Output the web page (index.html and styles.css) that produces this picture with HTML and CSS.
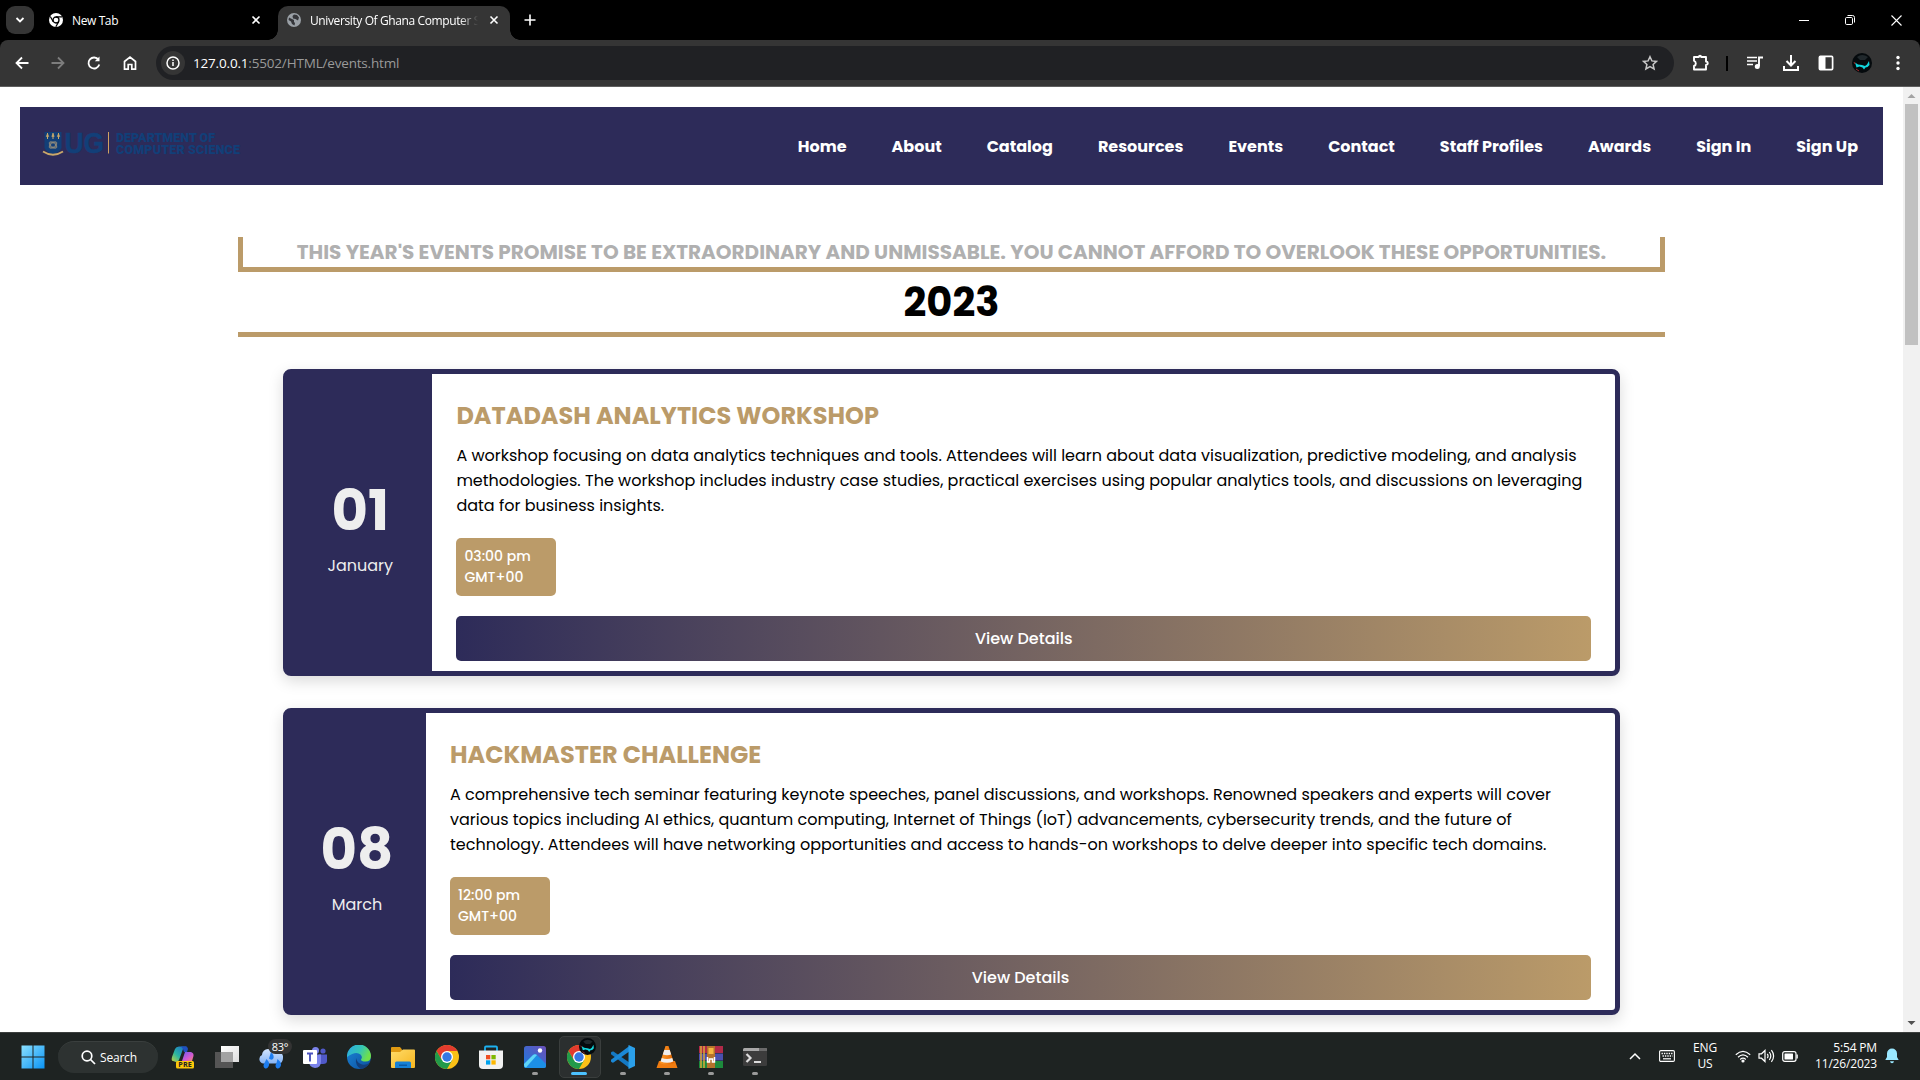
FILE: index.html
```html
<!DOCTYPE html>
<html lang="en">
<head>
<meta charset="utf-8">
<title>University Of Ghana Computer Science</title>
<link rel="stylesheet" href="styles.css">
</head>
<body>
<svg class="defs" width="0" height="0">
  <defs>
    <linearGradient id="gWin" x1="0" y1="0" x2="1" y2="1"><stop offset="0" stop-color="#8ae0ff"/><stop offset="1" stop-color="#0a93f5"/></linearGradient>
    <linearGradient id="gCopA" x1="0" y1="1" x2="1" y2="0"><stop offset="0" stop-color="#c8d63a"/><stop offset=".4" stop-color="#2bb5a0"/><stop offset="1" stop-color="#1a63d8"/></linearGradient>
    <linearGradient id="gCopB" x1="0" y1="0" x2="1" y2="1"><stop offset="0" stop-color="#6a5cf0"/><stop offset=".6" stop-color="#d45ad0"/><stop offset="1" stop-color="#f58a6a"/></linearGradient>
    <linearGradient id="gCloud" x1="0" y1="0" x2="0" y2="1"><stop offset="0" stop-color="#d3e5ff"/><stop offset="1" stop-color="#86b4f5"/></linearGradient>
    <linearGradient id="gEdge" x1="0" y1="0" x2="1" y2=".4"><stop offset="0" stop-color="#2aa8e8"/><stop offset=".6" stop-color="#35c6b4"/><stop offset="1" stop-color="#6fe04a"/></linearGradient>
    <linearGradient id="gEdgeB" x1="0" y1="0" x2="1" y2="1"><stop offset="0" stop-color="#1b86d8"/><stop offset="1" stop-color="#0c4f9e"/></linearGradient>
    <linearGradient id="gFold" x1="0" y1="0" x2="1" y2="1"><stop offset="0" stop-color="#ffdc6a"/><stop offset="1" stop-color="#f6b51e"/></linearGradient>
    <linearGradient id="gPhoto" x1="0" y1="1" x2="1" y2="0"><stop offset="0" stop-color="#1a7be0"/><stop offset="1" stop-color="#6b4fb8"/></linearGradient>
    <linearGradient id="gCone" x1="0" y1="0" x2="1" y2="0"><stop offset="0" stop-color="#ff9a2a"/><stop offset="1" stop-color="#e06400"/></linearGradient>
    <linearGradient id="gSq" x1="0" y1="0" x2="1" y2="1"><stop offset="0" stop-color="#fff"/><stop offset="1" stop-color="#ddd"/></linearGradient>
    <symbol id="chrome" viewBox="0 0 24 24">
      <circle cx="12" cy="12" r="12" fill="#fbc116"/>
      <path d="M12 6H22.4A12 12 0 0 0 1.6 6L6.8 15Z" fill="#e33b2e"/>
      <path d="M1.6 6A12 12 0 0 0 12 24L17.2 15 12 12 6.8 15Z" fill="#229a4a"/>
      <circle cx="12" cy="12" r="6" fill="#fff"/><circle cx="12" cy="12" r="4.7" fill="#3578e5"/>
    </symbol>
    <symbol id="x" viewBox="0 0 10 10"><path d="M1.5 1.5l7 7M8.500 1.500l-7 7" stroke="currentColor" stroke-width="1.6"/></symbol>
    <symbol id="avatar" viewBox="0 0 20 20"><circle cx="10" cy="10" r="10" fill="#050a0d"/><path d="M5 4Q10 0 16 4L13 7 8 7Z" fill="#20282c"/><path d="M3 9.500l3 2 4 .5 3 1 2-1.500 2-3.500.5 4-2 2-2 .5-1.500 2-1.500-2-3-1-3 1Z" fill="#12d5dd"/><path d="M2 9l1 2M4 16l3 2" stroke="#a02a2a"/></symbol>
  </defs>
</svg>

<div class="screen">
  <header class="tabstrip">
    <button class="tabsearch"><svg width="10" height="8" viewBox="0 0 10 8"><path d="M1.500 2l3.500 3.500L8.500 2" fill="none" stroke="#fff" stroke-width="1.800"/></svg></button>
    <div class="tab">
      <svg width="14" height="14" viewBox="0 0 14 14"><circle cx="7" cy="7" r="7" fill="#fff"/><circle cx="7" cy="7" r="3" fill="#fff" stroke="#000" stroke-width="1.300"/><path d="M7 3.800h6M4.200 8.600L1.300 3.500M9.700 8.700L6.800 13.800" stroke="#000" stroke-width="1.200"/></svg>
      <span class="tab-title">New Tab</span>
      <svg class="tab-x" width="10" height="10"><use href="#x"/></svg>
    </div>
    <div class="tab active">
      <svg width="14" height="14" viewBox="0 0 14 14"><circle cx="7" cy="7" r="7" fill="#9aa0a6"/><path d="M2 4.500L5 6l2 1v2l1 1-.5 2.500L5 11 4 8.500 1.500 7ZM7 1.500l3 .5 2 2.500-1 3-2.500-1.500L6 5.500 5.500 3Z" fill="#35363a"/></svg>
      <span class="tab-title">University Of Ghana Computer Science</span>
      <svg class="tab-x" width="10" height="10"><use href="#x"/></svg>
    </div>
    <svg class="newtab" width="12" height="12" viewBox="0 0 12 12"><path d="M6 .5v11M.5 6h11" stroke="#fff" stroke-width="1.600"/></svg>
    <div class="winbtns">
      <svg width="10" height="12" viewBox="0 0 10 12"><path d="M0 6.500h10" stroke="#fff"/></svg>
      <svg width="10" height="10" viewBox="0 0 10 10" fill="none" stroke="#fff"><rect x=".5" y="2.500" width="7" height="7" rx="1.200"/><path d="M2.500 .5h5a2 2 0 0 1 2 2v5"/></svg>
      <svg width="11" height="11" viewBox="0 0 11 11"><path d="M.5 .5l10 10M10.500 .5l-10 10" stroke="#fff" stroke-width="1.100"/></svg>
    </div>
  </header>

  <div class="toolbar">
    <div class="navicons">
      <svg width="16" height="16" viewBox="0 0 16 16" fill="none" stroke="#fff" stroke-width="1.800"><path d="M14.500 8H3M8 2.500L2.500 8 8 13.500"/></svg>
      <svg width="16" height="16" viewBox="0 0 16 16" fill="none" stroke="#7d7d7d" stroke-width="1.800"><path d="M1.500 8H13M8 2.500L13.500 8 8 13.500"/></svg>
      <svg width="16" height="16" viewBox="0 0 16 16" fill="none" stroke="#fff" stroke-width="1.800"><path d="M13.300 9.500A5.500 5.500 0 1 1 12.500 4.800"/><path d="M13.500 1.500v4.800H8.800Z" fill="#fff" stroke="none"/></svg>
      <svg width="16" height="16" viewBox="0 0 16 16" fill="none" stroke="#fff" stroke-width="1.700"><path d="M2.500 6.500L8 2l5.500 4.500V14.200H9.800V9.500H6.200v4.700H2.500Z"/></svg>
    </div>
    <div class="omnibox">
      <span class="info"><svg width="14" height="14" viewBox="0 0 14 14" fill="none" stroke="#fff" stroke-width="1.500"><circle cx="7" cy="7" r="6"/><path d="M7 6v4M7 3.500v1.400"/></svg></span>
      <span class="url"><b>127.0.0.1</b>:5502/HTML/events.html</span>
      <svg class="star" width="16" height="16" viewBox="0 0 16 16"><path d="M8 1.700l1.900 4.200 4.600.5-3.400 3.100 1 4.500L8 11.700 3.900 14l1-4.500L1.500 6.400l4.600-.5Z" fill="none" stroke="#c7c7c7" stroke-width="1.500"/></svg>
    </div>
    <div class="actions">
      <svg width="18" height="18" viewBox="0 0 18 18"><path d="M2 3h4.800q.2-1.300 1.200-1.300T9.200 3H14V7.500q1.800.2 1.800 1.700T14 11V15.500H2V12q1.800-.5 1.800-2.600T2 6.800Z" fill="none" stroke="#fff" stroke-width="1.900" stroke-linejoin="round"/></svg>
      <i class="sep"></i>
      <svg width="18" height="16" viewBox="0 0 18 16"><path d="M1 2.500h10M1 6h10M1 9.500h6" stroke="#fff" stroke-width="1.700"/><path d="M13 11V2.500h4" fill="none" stroke="#fff" stroke-width="1.900"/><circle cx="11.300" cy="11.500" r="2.500" fill="#fff"/></svg>
      <svg width="18" height="18" viewBox="0 0 18 18" fill="none" stroke="#fff" stroke-width="2"><path d="M9 1v10M4.500 7L9 11.500 13.500 7M2 12v4h14v-4"/></svg>
      <svg width="16" height="16" viewBox="0 0 16 16"><rect x="1.400" y="1.400" width="13.200" height="13.200" rx="1" fill="none" stroke="#fff" stroke-width="1.700"/><path d="M1 1h6.500v14H1Z" fill="#fff"/></svg>
      <svg width="20" height="20"><use href="#avatar"/></svg>
      <svg width="4" height="16" viewBox="0 0 4 16" fill="#fff"><circle cx="2" cy="2.500" r="1.700"/><circle cx="2" cy="8" r="1.700"/><circle cx="2" cy="13.500" r="1.700"/></svg>
    </div>
  </div>

  <div class="viewport">
    <main class="page">
      <nav class="nav">
        <svg class="logo" width="204" height="34" viewBox="0 -2 204 34">
          <path d="M4.500 2H21.500V18Q19 23 13 24 7 23 4.500 18Z" fill="#123f78"/>
          <path d="M7.500 3v6M13 3v6M18.500 3v6" stroke="#c9a86a"/><path d="M6.300 6.500l1.200-3 1.200 3ZM11.800 6.500l1.200-3 1.200 3ZM17.300 6.500l1.200-3 1.200 3Z" fill="#c9a86a" stroke="#c9a86a" stroke-width=".6"/>
          <g fill="none" stroke="#a8997c" stroke-width=".7"><ellipse cx="13" cy="15" rx="4.500" ry="2" transform="rotate(35 13 15)"/><ellipse cx="13" cy="15" rx="4.500" ry="2" transform="rotate(-35 13 15)"/><circle cx="13" cy="15" r="3.200"/></g>
          <path d="M3 21.500Q13 28 23 21.500" fill="none" stroke="#c9a86a" stroke-width="1.800"/>
          <text class="logo-ug" x="24.500" y="23.200" textLength="39.500" lengthAdjust="spacingAndGlyphs">UG</text>
          <rect x="68" y="2" width="1" height="21.500" fill="#d0a262"/>
          <text class="logo-txt" x="76" y="12" textLength="99" lengthAdjust="spacing">DEPARTMENT OF</text>
          <text class="logo-txt" x="76" y="23.500" textLength="124" lengthAdjust="spacing">COMPUTER SCIENCE</text>
        </svg>
        <ul class="links">
          <li>Home</li><li>About</li><li>Catalog</li><li>Resources</li><li>Events</li><li>Contact</li><li>Staff Profiles</li><li>Awards</li><li>Sign In</li><li>Sign Up</li>
        </ul>
      </nav>

      <section class="events">
        <h2 class="tagline">THIS YEAR'S EVENTS PROMISE TO BE EXTRAORDINARY AND UNMISSABLE. YOU CANNOT AFFORD TO OVERLOOK THESE OPPORTUNITIES.</h2>
        <h1 class="year">2023</h1>

        <article class="card january">
          <div class="date"><span class="day">01</span><span class="month">January</span></div>
          <div class="body">
            <h3>DATADASH ANALYTICS WORKSHOP</h3>
            <p>A workshop focusing on data analytics techniques and tools. Attendees will learn about data visualization, predictive modeling, and analysis methodologies. The workshop includes industry case studies, practical exercises using popular analytics tools, and discussions on leveraging data for business insights.</p>
            <div class="time"><span>03:00 pm</span><span>GMT+00</span></div>
            <a class="details">View Details</a>
          </div>
        </article>

        <article class="card march">
          <div class="date"><span class="day">08</span><span class="month">March</span></div>
          <div class="body">
            <h3>HACKMASTER CHALLENGE</h3>
            <p>A comprehensive tech seminar featuring keynote speeches, panel discussions, and workshops. Renowned speakers and experts will cover various topics including AI ethics, quantum computing, Internet of Things (IoT) advancements, cybersecurity trends, and the future of technology. Attendees will have networking opportunities and access to hands-on workshops to delve deeper into specific tech domains.</p>
            <div class="time"><span>12:00 pm</span><span>GMT+00</span></div>
            <a class="details">View Details</a>
          </div>
        </article>
      </section>
    </main>
    <div class="scrollbar">
      <svg width="17" height="17" viewBox="0 0 17 17"><path d="M4.500 11L8.500 7l4 4Z" fill="#a3a3a3"/></svg>
      <i class="thumb"></i>
      <svg class="down" width="17" height="17" viewBox="0 0 17 17"><path d="M4.500 6L8.500 10l4-4Z" fill="#505050"/></svg>
    </div>
  </div>

  <footer class="taskbar">
    <svg class="start" width="24" height="24" viewBox="0 0 24 24"><path d="M.5 .5h11v11H.5ZM12.500 .5h11v11h-11ZM.5 12.500h11v11H.5ZM12.500 12.500h11v11h-11Z" fill="url(#gWin)"/></svg>
    <div class="search"><svg width="15" height="15" viewBox="0 0 15 15" fill="none" stroke="#fff" stroke-width="1.700"><circle cx="6" cy="6" r="4.800"/><path d="M9.500 9.500L14 14"/></svg>Search</div>
    <div class="apps">
      <span class="app"><svg width="24" height="24" viewBox="0 0 24 24"><path d="M2 16Q0 16 1 12L4 4Q5 1.500 8 1.500H16L12 4 8 15Q7 17 5 17Z" fill="url(#gCopA)"/><path d="M10 1.500h5Q17 2 17 4l-1 3H13L12 4Z" fill="#1f4fc0"/><path d="M14 7H20Q23 8 22.500 11L21 16H11Z" fill="url(#gCopB)"/><rect x="5" y="16" width="18" height="7.500" rx="1.500" fill="#fcc80a"/><text class="pre" x="7.300" y="22.300" textLength="13.500">PRE</text></svg></span>
      <span class="app"><svg width="24" height="24" viewBox="0 0 24 24"><rect x="6" y="1" width="18" height="16" fill="url(#gSq)"/><rect x="0" y="7" width="18" height="16" fill="#555"/><rect x="6" y="7" width="12" height="10" fill="#a2a2a2"/></svg></span>
      <span class="app"><svg width="24" height="24" viewBox="0 0 24 24"><path d="M4 18.500a4.500 4.500 0 0 1-1-8.500 6 6 0 0 1 6-6 6 6 0 0 1 6 3 6 6 0 0 1 9 6q0 5.500-5 5.500Z" fill="url(#gCloud)"/><path d="M7.500 14q4 4 2 7.500-1.500 3-4 1.500-2-2 0-5ZM18.500 14q5 4 3 7.500-1.500 3-4 1.500-2-2 0-5ZM12 7q4 4 2 7-2 1.500-4-.5Z" fill="#1d7df0"/></svg><b class="temp">83°</b></span>
      <span class="app"><svg width="24" height="24" viewBox="0 0 24 24"><circle cx="12.500" cy="5.500" r="3.500" fill="#7b83eb"/><circle cx="20" cy="6" r="2.600" fill="#5059c9"/><path d="M16 9.500h8V16q0 3-4 3h-4Z" fill="#5059c9"/><path d="M6 9.500h12v7q0 6-6 6.500-6-1-6-6.500Z" fill="#7b83eb"/><rect x="0" y="5" width="14" height="14" rx="1" fill="#fff"/><path d="M4 8.500h6M7 8.500v8" stroke="#4a52bd" stroke-width="1.900"/></svg></span>
      <span class="app"><svg width="24" height="24" viewBox="0 0 24 24"><circle cx="12" cy="12" r="12" fill="url(#gEdgeB)"/><path d="M0 12A12 12 0 0 1 24 11Q24 16.500 18.500 16.500 14 16.500 14 14.500 16 12 13.500 9.500 9 5.500 0 12Z" fill="url(#gEdge)"/><path d="M9 13q1 5 6 6.500 4 1 7.500-1.500Q20 23 14 24 8 21 9 13Z" fill="#123f7c"/></svg></span>
      <span class="app"><svg width="24" height="24" viewBox="0 0 24 24"><path d="M0 3q0-1 1-1h8l2 2.500V7H0Z" fill="#e09a12"/><path d="M0 7h9l3-2.500h11q1 0 1 1V22q0 1-1 1H1q-1 0-1-1Z" fill="url(#gFold)"/><path d="M4 23v-5q0-1.500 1.500-1.500h13Q20 16.500 20 18v5Z" fill="#1681d6"/><rect x="8" y="19.500" width="8" height="1.500" fill="#0b5aa5"/></svg></span>
      <span class="app"><svg width="24" height="24"><use href="#chrome"/></svg></span>
      <span class="app"><svg width="24" height="24" viewBox="0 0 24 24"><path d="M6 6V2.500q0-1 1-1h10q1 0 1 1V6" fill="none" stroke="#1cb1f0" stroke-width="1.800"/><path d="M0 5.500h24V20q0 4-4 4H4q-4 0-4-4Z" fill="#f2f2f2"/><path d="M7 10h4.300v4.300H7Z" fill="#f04f22"/><path d="M12.400 10h4.300v4.300h-4.300Z" fill="#7eb801"/><path d="M7 15.300h4.300v4.300H7Z" fill="#00a3ee"/><path d="M12.400 15.300h4.300v4.300h-4.300Z" fill="#fdb802"/></svg></span>
      <span class="app running"><svg width="24" height="24" viewBox="0 0 24 24"><rect x="1" y="1" width="22" height="22" rx="2.500" fill="url(#gPhoto)"/><path d="M1 19L10 10q2-1.500 4 0l9 9v2q0 2-2 2H3q-2 0-2-2Z" fill="#1c8fe6"/><path d="M1 19L10 10q2-1.500 4 0L3 22.500Q1 22 1 20Z" fill="#5fd4f7"/><circle cx="17" cy="5.500" r="2.200" fill="#fff"/></svg></span>
      <span class="app current"><svg width="24" height="24"><use href="#chrome"/></svg><svg class="badge" width="17" height="17"><use href="#avatar"/></svg></span>
      <span class="app running"><svg width="24" height="24" viewBox="0 0 24 24"><path d="M0 7.500Q1 6 2.500 6.500L19 18v5.500L0 9.300Z" fill="#1479c4"/><path d="M0 16.500Q1 18 2.500 17.500L19 6V.5L0 14.700Z" fill="#1b88d6"/><path d="M17.500 0L24 3v18l-6.500 3Z" fill="#2ba0ea"/></svg></span>
      <span class="app running"><svg width="24" height="24" viewBox="0 0 24 24"><path d="M4 16h16l2.500 7h-21Z" fill="#f07c10"/><path d="M10.500 1h3L19 18q-7 3.500-14 0Z" fill="url(#gCone)"/><path d="M9.300 5h5.400l1.500 4.500q-4 1.500-8.400 0ZM6.800 13q5 2 10.400 0l1.200 3.500q-6 2.500-12.800 0Z" fill="#eee"/></svg></span>
      <span class="app running"><svg width="24" height="24" viewBox="0 0 24 24"><rect y="1" width="24" height="7" fill="#b12a48"/><rect y="8.500" width="24" height="7" fill="#4a4fae"/><rect y="16" width="24" height="7" fill="#1d8a3c"/><path d="M2 1v22M5 1v22" stroke="#d9a93a" stroke-width="1.500"/><rect x="8" y="1" width="8" height="22" fill="#b4722c"/><path d="M9.500 3h5v6h-5Z" fill="#f5b640"/><path d="M8.500 12v5h2v-3h3v3h2v-5" fill="none" stroke="#fff" stroke-width="1.500"/></svg></span>
      <span class="app running"><svg width="24" height="24" viewBox="0 0 24 24"><rect y="3" width="24" height="18" rx="1.500" fill="#3c3c3c"/><path d="M0 6V4.500Q0 3 1.500 3h21Q24 3 24 4.500V6Z" fill="#a8a8a8"/><path d="M16 3h6.500Q24 3 24 4.500V6h-8Z" fill="#6a6a6a"/><path d="M3.500 9l4 4-4 4" fill="none" stroke="#ddd" stroke-width="2.200"/><path d="M11 17h7" stroke="#eee" stroke-width="1.800"/></svg></span>
    </div>
    <div class="tray">
      <svg class="chev" width="12" height="8" viewBox="0 0 12 8"><path d="M1 7l5-5 5 5" fill="none" stroke="#fff" stroke-width="1.500"/></svg>
      <svg class="kbd" width="16" height="12" viewBox="0 0 16 12"><rect x=".6" y=".6" width="14.800" height="10.800" rx="1.200" fill="none" stroke="#fff" stroke-width="1.100"/><path d="M2.500 3.500h11M3.500 6h10" stroke="#fff" stroke-width="1.300" stroke-dasharray="1.400 1"/><path d="M4 8.800h8" stroke="#fff" stroke-width="1.200"/></svg>
      <div class="lang">ENG<br>US</div>
      <div class="status">
        <svg width="16" height="13" viewBox="0 0 16 13" fill="none" stroke="#fff" stroke-width="1.200"><path d="M.8 4.800q7.200-7 14.400 0M3 7.200q5-4.800 10 0M5.200 9.500q2.800-2.600 5.600 0"/><circle cx="8" cy="11" r="1" fill="#fff"/></svg>
        <svg width="17" height="14" viewBox="0 0 17 14" fill="none" stroke="#fff" stroke-width="1.200"><path d="M1 4.800h2.500L7 1.500v11L3.500 9.200H1ZM9.300 4.800q1.500 2.200 0 4.400M11.300 3q3 4 0 8M13.400 1.200q4.400 5.800 0 11.600"/></svg>
        <svg width="17" height="11" viewBox="0 0 17 11"><rect x=".7" y=".7" width="13.300" height="9.600" rx="2" fill="none" stroke="#fff" stroke-width="1.200"/><rect x="2.500" y="2.500" width="8.500" height="6" rx=".6" fill="#fff"/><path d="M14.500 3.500h1.300v4h-1.300Z" fill="#fff"/></svg>
      </div>
      <div class="clock">5:54 PM<br>11/26/2023</div>
      <svg class="bell" width="14" height="16" viewBox="0 0 14 16" fill="#9be8ff"><path d="M7 .5a5 5 0 0 1 5 5V9l1.700 3H.3L2 9V5.500a5 5 0 0 1 5-5ZM5 13.200h4q-.4 2-2 2t-2-2Z"/></svg>
    </div>
  </footer>
</div>
</body>
</html>
```
FILE: styles.css
```css
* { box-sizing: border-box; }
body { margin: 0; background: #fff; font-family: Poppins, Inter, sans-serif; overflow: hidden; }
.defs { position: absolute; }
svg { display: block; flex: none; }
.screen { width: 1920px; height: 1080px; display: flex; flex-direction: column; background: #000; }

/* browser chrome */
.tabstrip, .toolbar, .taskbar { font-family: "Segoe UI", "Open Sans", sans-serif; color: #fff; }
.tabstrip { height: 40px; background: #000; display: flex; align-items: center; padding-left: 6px; font-size: 12px; letter-spacing: -.39px; }
.tabsearch { width: 28px; height: 28px; padding: 0; border: 0; border-radius: 9px; background: #353535; display: flex; align-items: center; justify-content: center; }
.tab { height: 34px; align-self: flex-end; display: flex; align-items: center; padding: 0 11px 6px 15px; width: 238px; }
.tab:not(.active) { width: 244px; padding-right: 17px; }
.tab-title { flex: 1; margin-left: 9px; white-space: nowrap; overflow: hidden; }
.tab.active { position: relative; width: 232px; background: #353535; border-radius: 10px 10px 0 0; padding: 0 11px 6px 9px; }
.tab.active::before, .tab.active::after { content: ""; position: absolute; bottom: 0; width: 10px; height: 10px; }
.tab.active::before { left: -10px; background: radial-gradient(circle at 0 0, transparent 9.500px, #353535 10px); }
.tab.active::after { right: -10px; background: radial-gradient(circle at 100% 0, transparent 9.500px, #353535 10px); }
.tab.active .tab-title { margin-right: 9px; -webkit-mask-image: linear-gradient(90deg, #000 150px, transparent 168px); mask-image: linear-gradient(90deg, #000 150px, transparent 168px); }
.newtab { margin-left: 14px; }
.winbtns { margin-left: auto; display: flex; align-items: center; gap: 36px; padding-right: 18px; }
.toolbar { height: 47px; background: #353535; border-bottom: 1px solid #5e5e5e; border-radius: 8px 8px 0 0; display: flex; align-items: center; }
.navicons { display: flex; gap: 20px; padding-left: 14px; width: 156px; }
.omnibox { width: 1518px; height: 34px; border-radius: 17px; background: #202124; display: flex; align-items: center; padding: 0 16px 0 5px; }
.info { width: 24px; height: 24px; border-radius: 50%; background: #353535; display: flex; align-items: center; justify-content: center; }
.url { margin-left: 8px; font-size: 13.500px; letter-spacing: -.18px; color: #9a9a9a; }
.url b { font-weight: 400; color: #fff; }
.star { margin-left: auto; }
.actions { display: flex; align-items: center; padding-left: 18px; }
.actions .sep { width: 2px; height: 15px; background: #000; margin: 0 18px 0 16px; }
.actions svg + svg { margin-left: 18px; }
.actions svg:last-child { margin-left: 24px; }

/* page viewport */
.viewport { height: 945px; background: #fff; display: flex; }
.page { width: 1903px; padding: 20px; overflow: hidden; }
.nav { height: 78px; background: #2d2b59; display: flex; align-items: center; padding: 0 25px 0 20px; }
.logo { margin-top: -3px; }
.logo-ug { font: 700 29px "Liberation Sans", sans-serif; fill: #123f78; stroke: #123f78; stroke-width: .5px; }
.logo-txt { font: 900 12.500px Roboto, sans-serif; fill: #123f78; }
.links { list-style: none; margin: 0 0 0 auto; padding: 0; display: flex; gap: 45px; color: #fff; font-size: 16px; font-weight: 700; white-space: nowrap; }

.events { width: 1427px; margin: 52px auto 0 218px; }
.tagline { margin: 0; height: 35px; line-height: 30px; border: 5px solid #bb9b69; border-top: 0; text-align: center; font-size: 20px; font-weight: 700; color: #b0b0b0; white-space: nowrap; }
.year { margin: 0; height: 65px; line-height: 60px; border-bottom: 5px solid #bb9b69; text-align: center; font-size: 40px; font-weight: 700; color: #000; }
.card { margin: 32px 45px 0; width: 1337px; height: 307px; border: 5px solid #2d2b59; border-radius: 8px; background: #fff; box-shadow: 0 5px 15px rgba(0, 0, 0, .15); display: flex; }
.date { flex: none; width: 144.400px; background: #2d2b59; color: #eee; display: flex; flex-direction: column; align-items: center; padding-top: 95px; }
.march .date { width: 138px; }
.day { font-size: 56px; font-weight: 700; line-height: 84px; }
.month { font-size: 16px; line-height: 24px; margin-top: 1px; }
.body { flex: 1; padding: 24px 24px 0; display: flex; flex-direction: column; }
h3 { margin: 0; font-size: 24px; font-weight: 700; line-height: 36px; color: #bb9b69; }
p { margin: 9px 0 0; font-size: 16px; line-height: 25px; color: #000; }
.time { margin-top: 20px; width: 100px; height: 58px; padding: 8px; background: #bb9b69; border-radius: 5px; color: #fff; display: flex; flex-direction: column; font-size: 14px; font-weight: 500; line-height: 21px; }
.details { margin-top: 20px; height: 45px; border-radius: 5px; background: linear-gradient(90deg, #2d2b59, #bb9b69); color: #fff; text-align: center; font-size: 16px; font-weight: 500; line-height: 45px; }

.scrollbar { width: 17px; background: #f1f1f1; display: flex; flex-direction: column; }
.thumb { margin: 0 2px; height: 241px; background: #c1c1c1; }
.down { margin-top: auto; }

/* taskbar */
.taskbar { height: 48px; background: #1e2322; border-top: 1px solid #3c3f3e; display: flex; align-items: center; padding-left: 21px; font-size: 12px; }
.search { width: 100px; height: 32px; margin-left: 13px; border-radius: 16px; background: #2d3231; border-top: 1px solid #3a3f3e; display: flex; align-items: center; padding-left: 23px; gap: 4px; letter-spacing: -.2px; }
.apps { display: flex; margin-left: 3px; }
.app { position: relative; width: 44px; height: 47px; display: flex; align-items: center; justify-content: center; }
.app.running::after, .app.current::after { content: ""; position: absolute; bottom: 5px; left: 19px; width: 6px; height: 3px; border-radius: 2px; background: #9a9a9a; }
.app.current::before { content: ""; position: absolute; left: 2px; top: 3px; width: 40px; height: 40px; border-radius: 5px; background: #2b2f2f; border: 1px solid #3a3e3d; }
.app.current svg { position: relative; }
.app.current::after { left: 14px; width: 16px; background: #4cc2ff; }
.app.current .badge { position: absolute; left: 22px; top: 5px; }
.temp { position: absolute; left: 19px; top: 6px; width: 24px; height: 15px; border-radius: 8px; background: #333; font-size: 11px; font-weight: 400; line-height: 15px; text-align: center; letter-spacing: -.3px; }
.pre { font: 700 7.200px "Open Sans", sans-serif; fill: #222; }
.tray { margin-left: auto; display: flex; align-items: center; line-height: 16px; letter-spacing: -.17px; padding: 0 21px 1px 0; }
.kbd { margin-left: 18px; }
.lang { width: 30px; margin-left: 15px; text-align: center; }
.status { display: flex; align-items: center; gap: 7px; margin-left: 15px; }
.clock { width: 78px; text-align: right; }
.bell { margin-left: 8px; }
```
